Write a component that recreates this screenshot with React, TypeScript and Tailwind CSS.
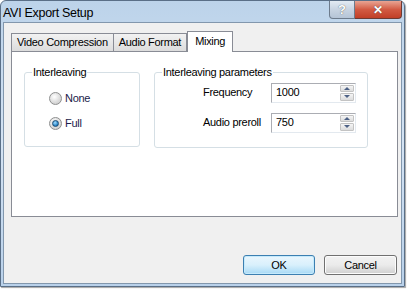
import React from "react";

const font = { fontFamily: '"Liberation Sans", Arial, sans-serif' };

function Radio({ label, checked }: { label: string; checked?: boolean }) {
  return (
    <label className="flex h-[13px] items-center gap-[3px] text-[#1b1b4a]">
      <span className="flex h-[13px] w-[13px] items-center justify-center rounded-full border border-[#8e8f8f] bg-[radial-gradient(circle_at_40%_35%,#ffffff,#d9d9d9_60%,#c6c6c6)]">
        {checked ? (
          <span className="h-[7px] w-[7px] rounded-full border border-[#1c4b72] bg-[radial-gradient(circle_at_40%_35%,#9fdcff,#1f7cc0_70%)]" />
        ) : null}
      </span>
      <span>{label}</span>
    </label>
  );
}

function Spin({ value }: { value: string }) {
  return (
    <div className="flex h-[20px] w-[85px] border border-[#abadb3] border-r-[#e3e9ef] border-b-[#e3e9ef] bg-white">
      <span className="flex flex-1 items-center pl-[4px] text-black">{value}</span>
      <div className="flex w-[16px] flex-col gap-[1px] p-[1px]">
        <span className="flex flex-1 items-center justify-center rounded-[1px] border border-[#c3c3c3] bg-gradient-to-b from-[#f5f5f5] to-[#dcdcdc]">
          <span className="h-0 w-0 border-x-[3px] border-b-[3px] border-x-transparent border-b-[#4d6185]" />
        </span>
        <span className="flex flex-1 items-center justify-center rounded-[1px] border border-[#c3c3c3] bg-gradient-to-b from-[#f5f5f5] to-[#dcdcdc]">
          <span className="h-0 w-0 border-x-[3px] border-t-[3px] border-x-transparent border-t-[#4d6185]" />
        </span>
      </div>
    </div>
  );
}

export default function App() {
  return (
    <div className="h-[289px] w-[407px] bg-white text-[11px] tracking-[-0.3px]" style={font}>
      <div className="flex h-[287px] w-[405px] flex-col rounded-t-[6px] border border-[#5a6f87] bg-gradient-to-b from-[#bcd3ea] via-[#d4e3f3] to-[#b9d1ea] px-[2px] pb-[2px] shadow-[1px_1px_1px_rgba(0,0,0,0.35)]">
        {/* title bar */}
        <div className="flex h-[21px] items-start justify-between">
          <span className="pt-[3px] text-[12.5px] text-black">AVI Export Setup</span>
          <div className="flex tracking-normal">
            <span className="flex h-[18px] w-[26px] items-center justify-center rounded-bl-[4px] border border-t-0 border-[#6d7b8c] bg-gradient-to-b from-[#e3ebf3] via-[#c8d4e2] to-[#b5c4d6] text-[13px] font-bold text-white [text-shadow:0_0_1px_#333]">
              ?
            </span>
            <span className="flex h-[18px] w-[47px] items-center justify-center rounded-br-[4px] border border-t-0 border-l-0 border-[#6d3a33] bg-gradient-to-b from-[#e8a493] via-[#d25a43] to-[#c13f27] text-[12px] font-bold text-white [text-shadow:0_0_1px_#333]">
              ✕
            </span>
          </div>
        </div>
        {/* client */}
        <div className="flex flex-1 flex-col border border-[#8297ad] bg-[#f0f0f0] pt-[8px] pl-[7px]">
          <div className="flex items-end">
            <span className="-mr-[1px] flex h-[18px] items-center border border-b-0 border-[#898c95] bg-gradient-to-b from-[#f2f2f2] to-[#dcdcdc] px-[5px] text-black">
              Video Compression
            </span>
            <span className="flex h-[18px] items-center border border-b-0 border-[#898c95] bg-gradient-to-b from-[#f2f2f2] to-[#dcdcdc] px-[5px] text-black">
              Audio Format
            </span>
            <span className="relative z-10 -mb-[1px] flex h-[21px] w-[46px] items-center justify-center border border-b-0 border-[#898c95] bg-white pb-[2px] text-black">
              Mixing
            </span>
          </div>
          <div className="flex h-[166px] w-[387px] items-start gap-[14px] border border-[#898c95] bg-white pt-[12px] pl-[12px]">
            <fieldset className="h-[83px] w-[116px] rounded-[3px] border border-[#d5dfe5] px-[7px]">
              <legend className="px-[1px] text-black">Interleaving</legend>
              <div className="flex flex-col gap-[12px] pt-[11px] pl-[17px]">
                <Radio label="None" />
                <Radio label="Full" checked />
              </div>
            </fieldset>
            <fieldset className="h-[84px] w-[214px] rounded-[3px] border border-[#d5dfe5] px-[7px]">
              <legend className="px-[1px] text-black">Interleaving parameters</legend>
              <div className="flex flex-col items-end gap-[10px] pt-[2px] pr-[4px]">
                <div className="flex items-center">
                  <span className="w-[68px]">Frequency</span>
                  <Spin value="1000" />
                </div>
                <div className="flex items-center">
                  <span className="w-[68px]">Audio preroll</span>
                  <Spin value="750" />
                </div>
              </div>
            </fieldset>
          </div>
          <div className="flex justify-end gap-[9px] pt-[38px] pr-[4px]">
            <button className="h-[20px] w-[72px] rounded-[3px] border border-[#3c7fb1] bg-gradient-to-b from-[#eaf6fd] via-[#d9f0fc] to-[#a7d9f5] text-black shadow-[inset_0_0_0_1px_#c5eafc]">
              OK
            </button>
            <button className="h-[20px] w-[73px] rounded-[3px] border border-[#707070] bg-gradient-to-b from-[#f2f2f2] via-[#ebebeb] to-[#cfcfcf] text-black shadow-[inset_0_0_0_1px_#fcfcfc]">
              Cancel
            </button>
          </div>
        </div>
      </div>
    </div>
  );
}
